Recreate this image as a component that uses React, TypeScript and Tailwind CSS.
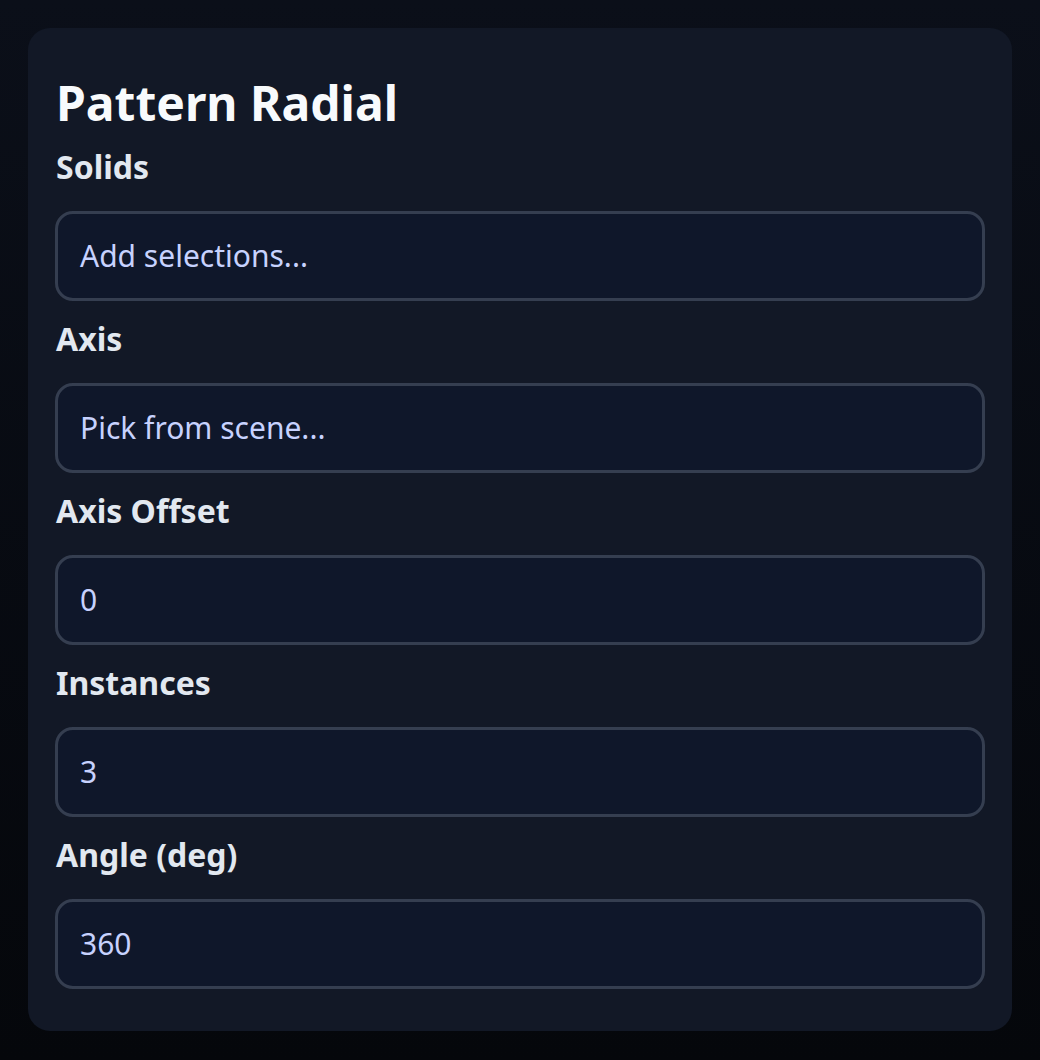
import React from "react";

const fields = [
  { label: "Solids", value: "Add selections..." },
  { label: "Axis", value: "Pick from scene..." },
  { label: "Axis Offset", value: "0" },
  { label: "Instances", value: "3" },
  { label: "Angle (deg)", value: "360" },
];

export default function App() {
  return (
    <div
      className="min-h-[1060px] w-full bg-gradient-to-b from-[#0b0f19] to-[#05070b] p-[28px]"
      style={{ fontFamily: '"Noto Sans", "Open Sans", sans-serif' }}
    >
      <div className="rounded-[22px] bg-[#121826] px-[27px] pt-[46px] pb-[42px]">
        <h1 className="pl-px text-[48px] font-bold leading-[1.2] text-[#f8fafc]">Pattern Radial</h1>
        <div className="mt-[15px] flex flex-col">
          {fields.map((f, i) => (
            <div key={f.label} className={i === 0 ? "" : "mt-[18px]"}>
              <div className="pl-px text-[32px] font-bold leading-[40px] text-[#e2e8f0]">{f.label}</div>
              <div className="mt-[24px] flex h-[90px] items-center rounded-[18px] border-[3px] border-[#353e50] bg-[#0f172a] px-[22px] text-[30px] text-[#c7d2fe]">
                {f.value}
              </div>
            </div>
          ))}
        </div>
      </div>
    </div>
  );
}
